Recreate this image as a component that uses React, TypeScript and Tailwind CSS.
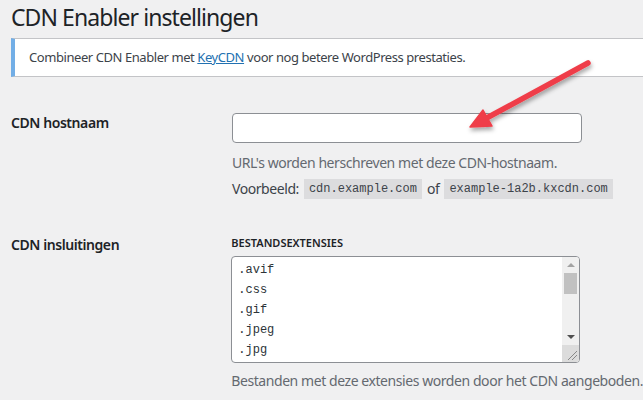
import React from "react";

const sans = { fontFamily: '"Noto Sans", "Open Sans", sans-serif' };
const mono = { fontFamily: '"Liberation Mono", "DejaVu Sans Mono", monospace' };

function Code({ children }: { children: React.ReactNode }) {
  return (
    <span
      className="inline-flex items-center h-[20px] px-[5px] bg-[#dcdcde] text-[12px] tracking-normal text-[#3c434a]"
      style={mono}
    >
      {children}
    </span>
  );
}

export default function App() {
  const exts = [".avif", ".css", ".gif", ".jpeg", ".jpg"];
  return (
    <div
      className="relative w-[643px] h-[400px] overflow-hidden bg-[#f0f0f1] text-[#1d2327] tracking-[-0.027em]"
      style={sans}
    >
      <div className="pl-[11px]">
        <h1 className="pt-[2px] text-[23px] leading-[30px] font-normal tracking-[-0.04em] text-[#1d2327]">
          CDN Enabler instellingen
        </h1>
        <div className="mt-[6px] h-[39px] flex items-center bg-white border-y border-[#c3c4c7] border-l-[4px] border-l-[#72aee6] pl-[14px] text-[13px] text-[#3c434a]">
          <span>
            Combineer CDN Enabler met{" "}
            <span className="text-[#2271b1] underline">KeyCDN</span> voor nog
            betere WordPress prestaties.
          </span>
        </div>

        <div className="mt-[36px] flex items-start">
          <div className="w-[221px] text-[14px] leading-[20px] font-semibold">
            CDN hostnaam
          </div>
          <div className="flex flex-col">
            <div className="w-[350px] h-[30px] bg-white border border-[#8c8f94] rounded-[4px]" />
            <div className="mt-[10px] text-[14px] leading-[20px] text-[#646970]">
              URL's worden herschreven met deze CDN-hostnaam.
            </div>
            <div className="mt-[6px] flex items-center text-[14px] leading-[20px] text-[#3c434a]">
              <span className="mr-[5px]">Voorbeeld:</span>
              <Code>cdn.example.com</Code>
              <span className="mx-[5px]">of</span>
              <Code>example-1a2b.kxcdn.com</Code>
            </div>
          </div>
        </div>

        <div className="mt-[36px] flex items-start">
          <div className="w-[221px] text-[14px] leading-[20px] font-semibold">
            CDN insluitingen
          </div>
          <div className="flex flex-col">
            <div className="text-[11px] leading-[16px] font-semibold uppercase tracking-normal text-[#1d2327]">
              Bestandsextensies
            </div>
            <div className="mt-[5px] w-[349px] h-[107px] bg-white border border-[#8c8f94] rounded-[4px] flex overflow-hidden">
              <div
                className="flex-1 pl-[6px] pt-[3px] text-[12px] leading-[20px] tracking-normal text-[#2c3338]"
                style={mono}
              >
                {exts.map((e) => (
                  <div key={e}>{e}</div>
                ))}
              </div>
              <div className="w-[17px] bg-[#f0f0f0] flex flex-col items-center">
                <div className="h-[16px] flex items-center justify-center">
                  <div className="w-0 h-0 border-x-[4px] border-x-transparent border-b-[4px] border-b-[#a3a3a3]" />
                </div>
                <div className="w-[13px] h-[21px] bg-[#c1c1c1]" />
                <div className="flex-1" />
                <div className="h-[16px] flex items-center justify-center">
                  <div className="w-0 h-0 border-x-[4px] border-x-transparent border-t-[4px] border-t-[#505050]" />
                </div>
                <div className="h-[17px] w-[17px] bg-[#dcdcdc] relative">
                  <svg width="17" height="17" viewBox="0 0 17 17" className="absolute inset-0">
                    <path d="M6 15 L15 6 M10 15 L15 10" stroke="#888" strokeWidth="1" />
                  </svg>
                </div>
              </div>
            </div>
            <div className="mt-[8px] text-[14px] leading-[20px] text-[#646970] whitespace-nowrap">
              Bestanden met deze extensies worden door het CDN aangeboden.
            </div>
          </div>
        </div>
      </div>

      <svg
        className="absolute left-0 top-0 pointer-events-none"
        width="643"
        height="400"
        viewBox="0 0 643 400"
      >
        <defs>
          <filter id="sh" x="-20%" y="-20%" width="140%" height="160%">
            <feDropShadow dx="1" dy="3" stdDeviation="2" floodColor="#000" floodOpacity="0.35" />
          </filter>
        </defs>
        <g filter="url(#sh)">
          <line x1="588" y1="63" x2="483" y2="120" stroke="#ef3e48" strokeWidth="5.5" strokeLinecap="round" />
          <polygon points="470,127 483,110 492,126" fill="#ef3e48" stroke="#ef3e48" strokeWidth="1.5" strokeLinejoin="round" />
        </g>
      </svg>
    </div>
  );
}
